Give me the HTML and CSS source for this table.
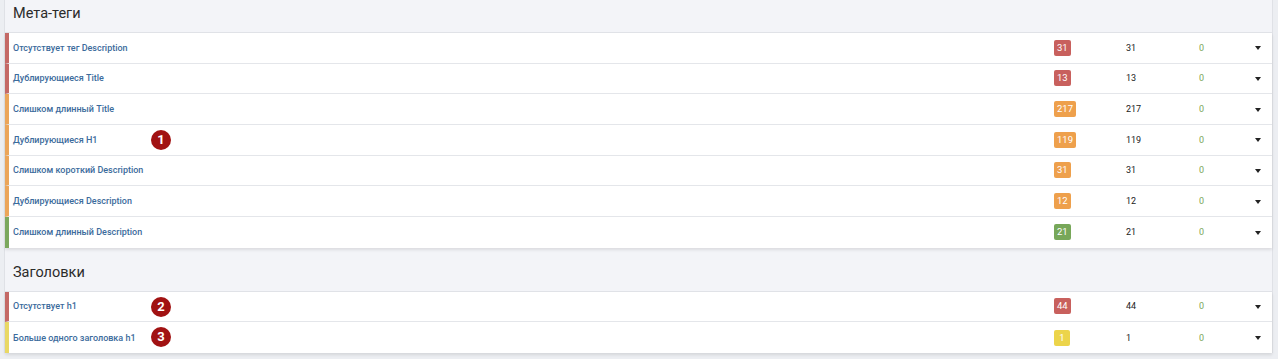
FILE: index.html
```html
<!DOCTYPE html>
<html lang="ru">
<head>
    <meta charset="UTF-8">
    <meta content="width=device-width, initial-scale=1.0" name="viewport">
    <title>Аудит</title>
    <link rel="stylesheet" href="styles.css">
</head>
<body>

<div class="panel">
    <div class="section section-first">
        <div class="section-title">Мета-теги</div>
        <div class="rows">
            <div class="row row-red">
                <a class="row-name" href="#">Отсутствует тег Description</a>
                <span class="col-badge"><span class="badge badge-red">31</span></span>
                <span class="col-total">31</span>
                <span class="col-new">0</span>
                <span class="col-caret"><span class="caret"></span></span>
            </div>
            <div class="row row-red">
                <a class="row-name" href="#">Дублирующиеся Title</a>
                <span class="col-badge"><span class="badge badge-red">13</span></span>
                <span class="col-total">13</span>
                <span class="col-new">0</span>
                <span class="col-caret"><span class="caret"></span></span>
            </div>
            <div class="row row-orange">
                <a class="row-name" href="#">Слишком длинный Title</a>
                <span class="col-badge"><span class="badge badge-orange">217</span></span>
                <span class="col-total">217</span>
                <span class="col-new">0</span>
                <span class="col-caret"><span class="caret"></span></span>
            </div>
            <div class="row row-orange">
                <a class="row-name" href="#">Дублирующиеся H1</a>
                <span class="marker">1</span>
                <span class="col-badge"><span class="badge badge-orange">119</span></span>
                <span class="col-total">119</span>
                <span class="col-new">0</span>
                <span class="col-caret"><span class="caret"></span></span>
            </div>
            <div class="row row-orange">
                <a class="row-name" href="#">Слишком короткий Description</a>
                <span class="col-badge"><span class="badge badge-orange">31</span></span>
                <span class="col-total">31</span>
                <span class="col-new">0</span>
                <span class="col-caret"><span class="caret"></span></span>
            </div>
            <div class="row row-orange">
                <a class="row-name" href="#">Дублирующиеся Description</a>
                <span class="col-badge"><span class="badge badge-orange">12</span></span>
                <span class="col-total">12</span>
                <span class="col-new">0</span>
                <span class="col-caret"><span class="caret"></span></span>
            </div>
            <div class="row row-green">
                <a class="row-name" href="#">Слишком длинный Description</a>
                <span class="col-badge"><span class="badge badge-green">21</span></span>
                <span class="col-total">21</span>
                <span class="col-new">0</span>
                <span class="col-caret"><span class="caret"></span></span>
            </div>
        </div>
    </div>

    <div class="section">
        <div class="section-title">Заголовки</div>
        <div class="rows">
            <div class="row row-red">
                <a class="row-name" href="#">Отсутствует h1</a>
                <span class="marker">2</span>
                <span class="col-badge"><span class="badge badge-red">44</span></span>
                <span class="col-total">44</span>
                <span class="col-new">0</span>
                <span class="col-caret"><span class="caret"></span></span>
            </div>
            <div class="row row-yellow">
                <a class="row-name" href="#">Больше одного заголовка h1</a>
                <span class="marker">3</span>
                <span class="col-badge"><span class="badge badge-yellow">1</span></span>
                <span class="col-total">1</span>
                <span class="col-new">0</span>
                <span class="col-caret"><span class="caret"></span></span>
            </div>
        </div>
    </div>
</div>

</body>
</html>
```

FILE: styles.css
```css
body {
    font-family: Roboto, "Noto Sans", Arial, sans-serif;
    margin: 0;
    background: #eceef2;
    height: 359px;
    overflow: hidden;
}

.panel {
    margin: 0 5px 0 4px;
    background: #f3f4f8;
    border-left: 1px solid #dfe1e6;
    border-right: 1px solid #dfe1e6;
    min-height: 359px;
}

.section-first {
    margin-top: -11px;
}

.section-title {
    height: 37px;
    line-height: 37px;
    padding-top: 6px;
    padding-left: 8px;
    font-size: 14.5px;
    color: #2b2b2b;
    border-bottom: 1px solid #e1e3e8;
}

.rows {
    background: #fff;
    box-shadow: 0 2px 3px rgba(0, 0, 0, 0.1);
}

.row {
    position: relative;
    display: flex;
    align-items: center;
    height: 29.67px;
    border-bottom: 1px solid #e4e6ea;
    border-left: 4px solid #ccc;
    font-size: 9px;
}

.row:last-child {
    border-bottom: none;
    height: 30.67px;
}

.row-red { border-left-color: #c46966; }
.row-orange { border-left-color: #eba55a; }
.row-green { border-left-color: #7ba85e; }
.row-yellow { border-left-color: #e9d864; }

.row-name {
    flex: 1;
    padding-left: 4px;
    color: #3c6b9c;
    text-decoration: none;
    font-weight: 500;
}

.marker {
    position: absolute;
    left: 142px;
    top: 5px;
    width: 20px;
    height: 20px;
    border-radius: 50%;
    background: #a11212;
    color: #fff;
    font-size: 13px;
    font-weight: bold;
    text-align: center;
    line-height: 20px;
}

.col-badge {
    width: 72px;
}

.badge {
    display: inline-block;
    min-width: 10px;
    padding: 0 3px;
    height: 16px;
    line-height: 16px;
    border-radius: 2px;
    color: #fff;
    font-size: 9.5px;
    text-align: center;
}

.badge-red { background: #c8605d; }
.badge-orange { background: #eea04c; }
.badge-green { background: #77a759; }
.badge-yellow { background: #ecd44a; }

.col-total {
    width: 73px;
    color: #222;
}

.col-new {
    width: 56px;
    color: #7aa75a;
}

.col-caret {
    width: 17px;
}

.caret {
    display: inline-block;
    width: 0;
    height: 0;
    border-left: 3.5px solid transparent;
    border-right: 3.5px solid transparent;
    border-top: 4px solid #222;
    vertical-align: middle;
}
```
